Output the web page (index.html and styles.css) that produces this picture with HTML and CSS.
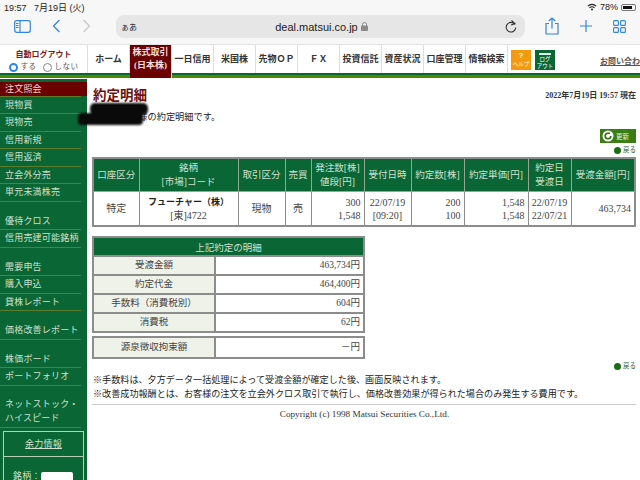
FILE: index.html
```html
<!DOCTYPE html>
<html lang="ja">
<head>
<meta charset="UTF-8">
<title>約定明細</title>
<link rel="stylesheet" href="styles.css">
</head>
<body>
    <div class="status-bar">
        <span class="status-time">19:57&nbsp;&nbsp; 7月19日 (火)</span>
        <span class="status-right">
            <svg width="10" height="8" viewBox="0 0 12 9"><path d="M1 3.500a7 7 0 0 1 10 0M3 5.500a4.200 4.200 0 0 1 6 0" fill="none" stroke="#222" stroke-width="1.400"/><circle cx="6" cy="7.500" r="1.200" fill="#222"/></svg>
            <span>78%</span>
            <span class="battery"><span class="battery-fill"></span></span>
        </span>
    </div>

    <div class="toolbar">
        <div class="toolbar-left">
            <svg width="17" height="13" viewBox="0 0 17 13"><rect x="0.700" y="0.700" width="15.600" height="11.600" rx="2" fill="none" stroke="#2f86e0" stroke-width="1.200"/><path d="M6 1v11" stroke="#2f86e0" stroke-width="1.200"/><path d="M2 3.500h2.500M2 5.500h2.500M2 7.500h2.500" stroke="#2f86e0"/></svg>
            <svg width="9" height="14" viewBox="0 0 9 14"><path d="M7.500 1L1.500 7l6 6" fill="none" stroke="#2f86e0" stroke-width="1.300"/></svg>
            <svg width="9" height="14" viewBox="0 0 9 14"><path d="M1.500 1l6 6-6 6" fill="none" stroke="#c9c9cc" stroke-width="1.300"/></svg>
        </div>
        <div class="url-bar">
            <span class="url-aa">ぁあ</span>
            <span class="url-text">deal.matsui.co.jp
                <svg width="7" height="9" viewBox="0 0 7 9"><rect y="3.500" width="7" height="5.500" rx="1" fill="#8a8a8a"/><path d="M1.500 4V2.500a2 2 0 0 1 4 0V4" fill="none" stroke="#8a8a8a"/></svg>
            </span>
            <svg class="reload" width="12" height="13" viewBox="0 0 12 13"><path d="M9.800 4.200A4.800 4.800 0 1 0 10.800 7.500" fill="none" stroke="#333" stroke-width="1.100"/><path d="M6.500 0.500l3.500 3.200-4 1.300" fill="none" stroke="#333" stroke-width="1.100"/></svg>
        </div>
        <div class="toolbar-right">
            <svg width="14" height="18" viewBox="0 0 14 18"><path d="M4 6.500H1v10.500h12V6.500h-3M7 11.500V1M3.800 4L7 1l3.200 3" fill="none" stroke="#2f86e0" stroke-width="1.200"/></svg>
            <svg width="12" height="12" viewBox="0 0 12 12"><path d="M6 0v12M0 6h12" stroke="#2f86e0" stroke-width="1.200"/></svg>
            <svg width="13" height="13" viewBox="0 0 13 13" fill="none" stroke="#2f86e0" stroke-width="1.100"><rect x="0.600" y="0.600" width="4.800" height="4.800" rx="1"/><rect x="7.600" y="0.600" width="4.800" height="4.800" rx="1"/><rect x="0.600" y="7.600" width="4.800" height="4.800" rx="1"/><rect x="7.600" y="7.600" width="4.800" height="4.800" rx="1"/></svg>
        </div>
    </div>

    <div class="site-nav">
        <div class="auto-logout">
            <div class="auto-logout-title">自動ログアウト</div>
            <div class="auto-logout-opts">
                <span class="radio radio-on"></span>する
                <span class="radio"></span>しない
            </div>
        </div>
        <a class="nav-item">ホーム</a>
        <a class="nav-item nav-current">株式取引<br>(日本株)</a>
        <a class="nav-item">一日信用</a>
        <a class="nav-item">米国株</a>
        <a class="nav-item">先物ＯＰ</a>
        <a class="nav-item">ＦＸ</a>
        <a class="nav-item">投資信託</a>
        <a class="nav-item">資産状況</a>
        <a class="nav-item">口座管理</a>
        <a class="nav-item">情報検索</a>
        <div class="nav-btns">
            <span class="nav-btn btn-help"><b>?</b>ヘルプ</span>
            <span class="nav-btn btn-logout"><i class="arrow"></i>ログ<br>アウト</span>
        </div>
        <a class="nav-contact">お問い合わ</a>
    </div>

    <div class="layout">
        <div class="sidebar">
            <div class="side-group">
                <a class="side-item side-current">注文照会</a>
                <a class="side-item">現物買</a>
                <a class="side-item">現物売</a>
                <a class="side-item">信用新規</a>
                <a class="side-item">信用返済</a>
                <a class="side-item">立会外分売</a>
                <a class="side-item">単元未満株売</a>
            </div>
            <div class="side-group">
                <a class="side-item">優待クロス</a>
                <a class="side-item">信用売建可能銘柄</a>
            </div>
            <div class="side-group">
                <a class="side-item">需要申告</a>
                <a class="side-item">購入申込</a>
                <a class="side-item">貸株レポート</a>
            </div>
            <div class="side-group">
                <a class="side-item">価格改善レポート</a>
            </div>
            <div class="side-group">
                <a class="side-item">株価ボード</a>
                <a class="side-item">ポートフォリオ</a>
            </div>
            <div class="side-group last">
                <a class="side-item side-tall">ネットストック・<br>ハイスピード</a>
            </div>
            <div class="power-box">
                <div class="power-title">余力情報</div>
                <div class="power-body">銘柄：<span class="power-input"></span></div>
            </div>
        </div>

        <div class="main">
            <div class="title-row">
                <h1>約定明細</h1>
                <span class="timestamp">2022年7月19日 19:57 現在</span>
            </div>
            <p class="lead">お客様の約定明細です。</p>
            <div class="blot"></div>

            <div class="action-links">
                <span class="btn-refresh">
                    <svg width="12" height="12" viewBox="0 0 12 12"><circle cx="6" cy="6" r="5.500" fill="#fff"/><path d="M8.800 6A2.800 2.800 0 1 1 6 3.200h2" fill="none" stroke="#2d6a12" stroke-width="1.600"/></svg>
                    更新
                </span>
                <span class="back-link"><i class="back-dot"></i>戻る</span>
            </div>

            <table class="grid order-table">
                <colgroup>
                    <col class="c1"><col class="c2"><col class="c3"><col class="c4"><col class="c5">
                    <col class="c6"><col class="c7"><col class="c8"><col class="c9"><col class="c10">
                </colgroup>
                <tr class="head">
                    <th>口座区分</th>
                    <th>銘柄<br>[市場]コード</th>
                    <th>取引区分</th>
                    <th>売買</th>
                    <th>発注数[株]<br>値段[円]</th>
                    <th>受付日時</th>
                    <th>約定数[株]</th>
                    <th>約定単価[円]</th>
                    <th>約定日<br>受渡日</th>
                    <th>受渡金額[円]</th>
                </tr>
                <tr class="data">
                    <td>特定</td>
                    <td><b class="stock">フューチャー（株）</b><br>[東]4722</td>
                    <td>現物</td>
                    <td>売</td>
                    <td class="num">300<br>1,548</td>
                    <td>22/07/19<br>[09:20]</td>
                    <td class="num">200<br>100</td>
                    <td class="num">1,548<br>1,548</td>
                    <td>22/07/19<br>22/07/21</td>
                    <td class="num">463,734</td>
                </tr>
            </table>

            <table class="grid summary-table">
                <colgroup><col class="s1"><col class="s2"></colgroup>
                <tr class="summary-head"><th colspan="2">上記約定の明細</th></tr>
                <tr><td class="label">受渡金額</td><td class="num">463,734円</td></tr>
                <tr><td class="label">約定代金</td><td class="num">464,400円</td></tr>
                <tr><td class="label">手数料（消費税別）</td><td class="num">604円</td></tr>
                <tr><td class="label">消費税</td><td class="num">62円</td></tr>
            </table>
            <table class="grid summary-table withhold">
                <colgroup><col class="s1"><col class="s2"></colgroup>
                <tr><td class="label">源泉徴収拘束額</td><td class="num">－円</td></tr>
            </table>

            <div class="action-links bottom-back">
                <span class="back-link"><i class="back-dot"></i>戻る</span>
            </div>

            <p class="note">※手数料は、夕方データ一括処理によって受渡金額が確定した後、画面反映されます。</p>
            <p class="note">※改善成功報酬とは、お客様の注文を立会外クロス取引で執行し、価格改善効果が得られた場合のみ発生する費用です。</p>
            <hr class="rule">
            <p class="copyright">Copyright (c) 1998 Matsui Securities Co.,Ltd.</p>
        </div>
    </div>
</body>
</html>
```

FILE: styles.css
```css
:root {
    --green: #0a6634;
    --maroon: #6b0000;
    --border: #8c8c8c;
    --label-bg: #eef2e8;
    --blue: #2f86e0;
}
html, body {
    margin: 0;
    height: 480px;
    overflow: hidden;
}
body {
    background: #fff;
    color: #222;
    font-family: "Liberation Serif", "Noto Sans CJK JP", serif;
    font-size: 11px;
}

/* browser chrome */
.status-bar {
    height: 14px;
    background: #f7f7f7;
    display: flex;
    justify-content: space-between;
    align-items: center;
    padding: 0 4px;
    font-family: "Liberation Sans", "Noto Sans CJK JP", sans-serif;
    font-size: 9px;
}
.status-right {
    display: flex;
    align-items: center;
    gap: 3px;
}
.battery {
    width: 15px;
    height: 7px;
    border: 1px solid #777;
    border-radius: 2px;
    display: block;
    box-sizing: border-box;
    padding: 1px;
}
.battery-fill {
    display: block;
    width: 78%;
    height: 100%;
    background: #111;
}
.toolbar {
    height: 30px;
    background: #f7f7f7;
    display: flex;
    align-items: flex-start;
    font-family: "Liberation Sans", "Noto Sans CJK JP", sans-serif;
}
.toolbar-left {
    width: 116px;
    height: 24px;
    display: flex;
    align-items: center;
    box-sizing: border-box;
    padding-left: 14px;
    gap: 21px;
}
.url-bar {
    width: 409px;
    height: 23px;
    margin-top: 1px;
    background: #e6e6e6;
    border-radius: 8px;
    display: flex;
    align-items: center;
    box-sizing: border-box;
    padding: 0 8px 0 5px;
}
.url-aa {
    font-size: 8px;
}
.url-text {
    flex: 1;
    text-align: center;
    font-size: 11px;
    padding-left: 1px;
}
.toolbar-right {
    flex: 1;
    height: 24px;
    display: flex;
    align-items: center;
    box-sizing: border-box;
    padding-left: 20px;
    gap: 21px;
}

/* site navigation */
.site-nav {
    height: 34px;
    display: flex;
    box-sizing: border-box;
    border-top: 1px solid #e4e4e4;
    border-bottom: 3px solid #4a8c00;
    padding-bottom: 2px;
    box-shadow: inset 0 -2px 0 var(--green);
    position: relative;
}
.auto-logout {
    width: 88px;
    text-align: center;
    font-size: 8px;
    padding-top: 4px;
    box-sizing: border-box;
    border-right: 1px solid #ddd;
}
.auto-logout-title {
    color: #7a1a1a;
    font-weight: bold;
    line-height: 11px;
}
.auto-logout-opts {
    display: flex;
    align-items: center;
    justify-content: center;
    gap: 3px;
    margin-top: 2px;
    color: #555;
    font-size: 7.500px;
    line-height: 10px;
    letter-spacing: 0.500px;
}
.radio {
    width: 9px;
    height: 9px;
    border: 1px solid #888;
    border-radius: 50%;
    display: inline-block;
    box-sizing: border-box;
    margin-left: 3px;
}
.radio-on {
    border: 2.500px solid var(--blue);
    margin-left: 0;
}
.nav-item {
    width: 42px;
    box-sizing: border-box;
    border-right: 1px solid #ddd;
    display: flex;
    align-items: center;
    justify-content: center;
    text-align: center;
    font-size: 9px;
    font-weight: bold;
    color: #333;
    line-height: 13px;
    white-space: nowrap;
}
.nav-current {
    background: var(--maroon);
    color: #f2dfdf;
    margin-bottom: -5px;
    padding-bottom: 5px;
}
.nav-btns {
    width: 92px;
    display: flex;
    gap: 4px;
    padding: 5px 0 0 3px;
    box-sizing: border-box;
}
.nav-btn {
    width: 20px;
    height: 20px;
    color: #fff;
    font-family: "Liberation Sans", "Noto Sans CJK JP", sans-serif;
    font-size: 5.500px;
    line-height: 6.500px;
    text-align: center;
    white-space: nowrap;
    overflow: hidden;
}
.btn-help {
    background: #f59a0c;
}
.btn-help b {
    display: block;
    font-size: 8px;
    line-height: 11px;
}
.btn-logout {
    background: #0a6634;
}
.arrow {
    display: block;
    width: 12px;
    height: 2px;
    margin: 3px auto 1px;
    background: #dfe;
}
.nav-contact {
    position: absolute;
    left: 600px;
    top: 10px;
    font-size: 8px;
    font-weight: bold;
    color: #555;
    text-decoration: underline;
    white-space: nowrap;
}

/* page body */
.layout {
    display: flex;
    height: 402px;
    padding-top: 1px;
}
.sidebar {
    width: 87px;
    flex-shrink: 0;
    background: var(--green);
    padding: 3px 0 0;
    box-sizing: border-box;
    color: #cfe0cf;
    font-size: 9px;
    letter-spacing: 0.200px;
    overflow: hidden;
}
.side-group {
    margin-bottom: 11px;
}
.side-group.last {
    margin-bottom: 3px;
}
.side-item {
    display: block;
    height: 17.500px;
    line-height: 17px;
    margin-right: 6px;
    padding-left: 5px;
    box-sizing: border-box;
    border-bottom: 1px solid #5d7d2e;
    white-space: nowrap;
}
.side-current {
    height: 14px;
    margin-right: 0;
    line-height: 14px;
    background: var(--maroon);
    color: #f0d8d8;
    border-bottom: none;
}
.side-current + .side-item {
    height: 18px;
    border-top: 1px solid #5d7d2e;
}
.side-tall {
    height: 31px;
    line-height: 14.500px;
}
.power-box {
    margin: 0 3px;
    border: 1px solid #b8cfb8;
    height: 80px;
}
.power-title {
    height: 24px;
    line-height: 25px;
    text-align: center;
    text-decoration: underline;
    border-bottom: 1px solid #b8cfb8;
}
.power-body {
    display: flex;
    align-items: flex-start;
    padding: 15px 0 0 9px;
    line-height: 8px;
}
.power-input {
    width: 32px;
    height: 20px;
    background: #fff;
    border-radius: 2px;
    display: block;
}
.main {
    flex: 1;
    position: relative;
    padding: 0 4px 0 6px;
    min-width: 0;
}
.title-row {
    display: flex;
    justify-content: space-between;
    align-items: center;
    height: 20px;
    margin-top: 5px;
}
h1 {
    margin: 0;
    font-size: 13.500px;
    color: #6b0f0f;
    font-weight: bold;
}
.timestamp {
    font-size: 8px;
    font-weight: bold;
    color: #333;
}
.lead {
    margin: 5px 0 0;
    height: 16px;
    line-height: 16px;
    font-size: 9.200px;
    padding-left: 27px;
}

/* marker scribble over the account name */
.blot {
    position: absolute;
    left: 3px;
    top: 24px;
    width: 58px;
    height: 12px;
    background: #0a0a0a;
    border-radius: 5px;
    filter: blur(0.800px);
}
.blot::after {
    content: "";
    position: absolute;
    left: -12px;
    top: 10px;
    width: 65px;
    height: 12px;
    background: #0a0a0a;
    border-radius: 4px;
}
.action-links {
    display: flex;
    flex-direction: column;
    align-items: flex-end;
    margin-top: 4px;
    height: 28px;
}
.btn-refresh {
    width: 36px;
    height: 14px;
    background: #3a7d12;
    color: #e8f2e0;
    font-size: 6.500px;
    display: flex;
    align-items: center;
    gap: 2px;
    box-sizing: border-box;
    padding-left: 2px;
    white-space: nowrap;
}
.back-link {
    font-size: 6.500px;
    color: #2d5a1e;
    margin-top: 3px;
    display: flex;
    align-items: center;
    gap: 2px;
    line-height: 8px;
}
.back-dot {
    width: 7px;
    height: 7px;
    border-radius: 50%;
    background: #1f6a14;
    display: block;
}
.grid {
    border-collapse: collapse;
    table-layout: fixed;
    text-align: center;
    font-size: 9.500px;
    color: #444;
    margin-left: -1px;
}
.grid th, .grid td {
    border: 1px solid var(--border);
    padding: 0 3px;
    font-weight: normal;
}
.order-table {
    width: 542px;
    border: 2px solid var(--border);
}
.order-table .head th {
    background: var(--green);
    color: #cfe0cf;
    height: 32px;
    line-height: 14px;
    border-color: #8fa88f;
    padding: 0;
    white-space: nowrap;
}
.order-table .data td {
    height: 33px;
    line-height: 13px;
    font-size: 10px;
}
.c1 { width: 46px; }
.c2 { width: 99px; }
.c3 { width: 47px; }
.c4 { width: 26px; }
.c5 { width: 53px; }
.c6 { width: 47px; }
.c7 { width: 53px; }
.c8 { width: 64px; }
.c9 { width: 43px; }
.c10 { width: 64px; }
.order-table .data td .stock {
    font-weight: bold;
    font-size: 9px;
    color: #222;
}
.num {
    text-align: right;
}
.grid td.num {
    padding-right: 3px;
}
.summary-table {
    width: 271px;
    border: 2px solid var(--border);
    margin-top: 9px;
}
.summary-head th {
    background: var(--green);
    color: #cfe0cf;
    height: 17px;
}
.summary-table td {
    height: 17px;
    line-height: 13px;
    font-size: 9.500px;
    border-width: 2px;
}
.s1 { width: 122px; }
.s2 { width: 149px; }
.summary-table .label {
    background: var(--label-bg);
}
.withhold {
    margin-top: 3px;
}
.withhold td {
    height: 19px;
}
.bottom-back {
    height: auto;
    margin-top: 0;
}
.note {
    margin: 0;
    font-size: 9.100px;
    line-height: 14px;
    color: #222;
    white-space: nowrap;
}
.bottom-back + .note {
    margin-top: 3px;
}
.rule {
    border: none;
    border-top: 1px solid #ccc;
    margin: 3px 0 0 -1px;
}
.copyright {
    margin: 4px 0 0;
    text-align: center;
    font-size: 9.200px;
    color: #333;
}
```
